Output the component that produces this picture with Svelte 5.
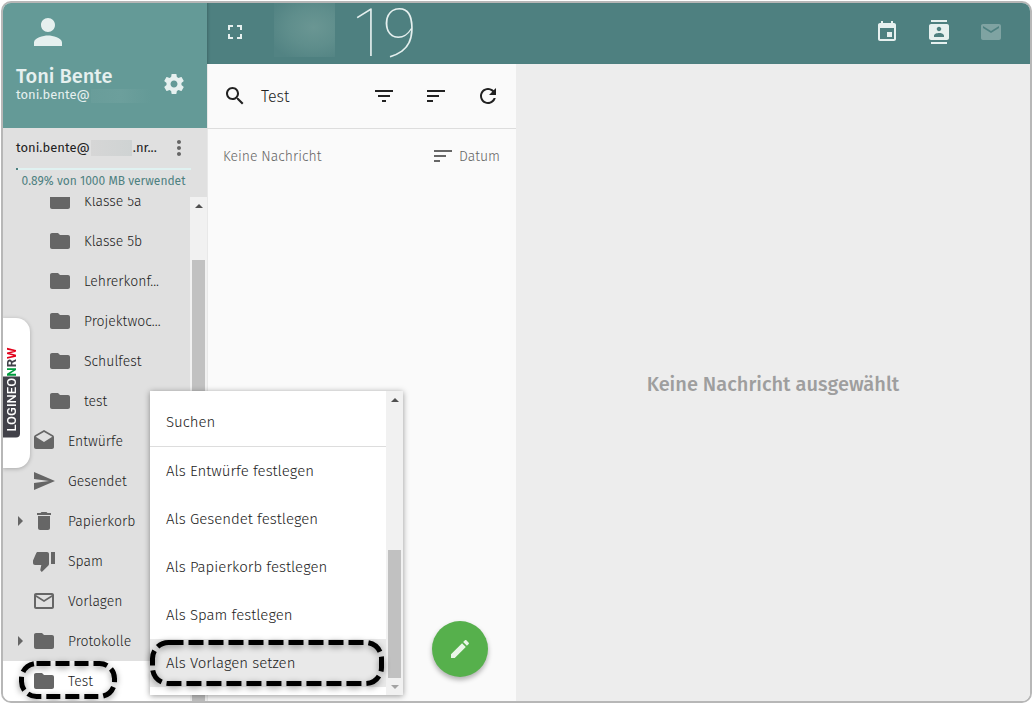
<script lang="ts">
	type Folder = {
		name : string;
		icon : string;
		child? : boolean;
		expandable? : boolean;
		active? : boolean;
	};

	const icons : Record<string, string> = {
		person: 'M12 12c2.21 0 4-1.79 4-4s-1.79-4-4-4-4 1.79-4 4 1.79 4 4 4zm0 2c-2.67 0-8 1.34-8 4v2h16v-2c0-2.66-5.33-4-8-4z',
		settings: 'M19.43 12.98c.04-.32.07-.64.07-.98s-.03-.66-.07-.98l2.11-1.65c.19-.15.24-.42.12-.64l-2-3.46c-.12-.22-.39-.3-.61-.22l-2.49 1c-.52-.4-1.08-.73-1.69-.98l-.38-2.65C14.46 2.18 14.25 2 14 2h-4c-.25 0-.46.18-.49.42l-.38 2.65c-.61.25-1.17.59-1.69.98l-2.49-1c-.23-.09-.49 0-.61.22l-2 3.46c-.13.22-.07.49.12.64l2.11 1.65c-.04.32-.07.65-.07.98s.03.66.07.98l-2.11 1.65c-.19.15-.24.42-.12.64l2 3.46c.12.22.39.3.61.22l2.49-1c.52.4 1.08.73 1.69.98l.38 2.65c.03.24.24.42.49.42h4c.25 0 .46-.18.49-.42l.38-2.65c.61-.25 1.17-.59 1.69-.98l2.49 1c.23.09.49 0 .61-.22l2-3.46c.12-.22.07-.49-.12-.64l-2.11-1.65zM12 15.5c-1.93 0-3.5-1.57-3.5-3.5s1.57-3.5 3.5-3.5 3.5 1.57 3.5 3.5-1.57 3.5-3.5 3.5z',
		more: 'M12 8c1.1 0 2-.9 2-2s-.9-2-2-2-2 .9-2 2 .9 2 2 2zm0 2c-1.1 0-2 .9-2 2s.9 2 2 2 2-.9 2-2-.9-2-2-2zm0 6c-1.1 0-2 .9-2 2s.9 2 2 2 2-.9 2-2-.9-2-2-2z',
		folder: 'M10 4H4c-1.1 0-1.99.9-1.99 2L2 18c0 1.1.9 2 2 2h16c1.1 0 2-.9 2-2V8c0-1.1-.9-2-2-2h-8l-2-2z',
		drafts: 'M21.99 8c0-.72-.37-1.35-.94-1.7L12 1 2.95 6.3C2.38 6.65 2 7.28 2 8v10c0 1.1.9 2 2 2h16c1.1 0 2-.9 2-2l-.01-10zM12 13L3.74 7.84 12 3l8.26 4.84L12 13z',
		send: 'M2.01 21L23 12 2.01 3 2 10l15 2-15 2z',
		trash: 'M6 19c0 1.1.9 2 2 2h8c1.1 0 2-.9 2-2V7H6v12zM19 4h-3.5l-1-1h-5l-1 1H5v2h14V4z',
		spam: 'M15 3H6c-.83 0-1.54.5-1.84 1.22l-3.02 7.05c-.09.23-.14.47-.14.73v2c0 1.1.9 2 2 2h6.31l-.95 4.57-.03.32c0 .41.17.79.44 1.06L9.83 23l6.59-6.59c.36-.36.58-.86.58-1.41V5c0-1.1-.9-2-2-2zm4 0v12h4V3h-4z',
		mailOutline: 'M20 4H4c-1.1 0-1.99.9-1.99 2L2 18c0 1.1.9 2 2 2h16c1.1 0 2-.9 2-2V6c0-1.1-.9-2-2-2zm0 14H4V8l8 5 8-5v10zm-8-7L4 6h16l-8 5z',
		mail: 'M20 4H4c-1.1 0-1.99.9-1.99 2L2 18c0 1.1.9 2 2 2h16c1.1 0 2-.9 2-2V6c0-1.1-.9-2-2-2zm0 4l-8 5-8-5V6l8 5 8-5v2z',
		arrow: 'M10 17l5-5-5-5v10z',
		fullscreen: 'M7 14H5v5h5v-2H7v-3zm-2-4h2V7h3V5H5v5zm12 7h-3v2h5v-5h-2v3zM14 5v2h3v3h2V5h-5z',
		calendar: 'M17 12h-5v5h5v-5zM16 1v2H8V1H6v2H5c-1.11 0-1.99.9-1.99 2L3 19c0 1.1.89 2 2 2h14c1.1 0 2-.9 2-2V5c0-1.1-.9-2-2-2h-1V1h-2zm3 18H5V8h14v11z',
		contacts: 'M20 0H4v2h16V0zM4 24h16v-2H4v2zM20 4H4c-1.1 0-2 .9-2 2v12c0 1.1.9 2 2 2h16c1.1 0 2-.9 2-2V6c0-1.1-.9-2-2-2zm-8 2.75c1.24 0 2.25 1.01 2.25 2.25s-1.01 2.25-2.25 2.25S9.75 10.24 9.75 9 10.76 6.75 12 6.75zM17 17H7v-1.5c0-1.67 3.33-2.5 5-2.5s5 .83 5 2.5V17z',
		search: 'M15.5 14h-.79l-.28-.27C15.41 12.59 16 11.11 16 9.5 16 5.91 13.09 3 9.5 3S3 5.91 3 9.5 5.91 16 9.5 16c1.61 0 3.09-.59 4.23-1.57l.27.28v.79l5 4.99L20.49 19l-4.99-5zm-6 0C7.01 14 5 11.99 5 9.5S7.01 5 9.5 5 14 7.01 14 9.5 11.99 14 9.5 14z',
		filter: 'M10 18h4v-2h-4v2zM3 6v2h18V6H3zm3 7h12v-2H6v2z',
		sort: 'M3 18h6v-2H3v2zM3 6v2h18V6H3zm0 7h12v-2H3v2z',
		refresh: 'M17.65 6.35C16.2 4.9 14.21 4 12 4c-4.42 0-7.99 3.58-7.99 8s3.57 8 7.99 8c3.73 0 6.84-2.55 7.73-6h-2.08c-.82 2.33-3.04 4-5.65 4-3.31 0-6-2.69-6-6s2.69-6 6-6c1.66 0 3.14.69 4.22 1.78L13 11h7V4l-2.35 2.35z',
		edit: 'M3 17.25V21h3.75L17.81 9.94l-3.75-3.75L3 17.25zM20.71 7.04c.39-.39.39-1.02 0-1.41l-2.34-2.34c-.39-.39-1.02-.39-1.41 0l-1.83 1.83 3.75 3.75 1.83-1.83z'
	};

	const folders : Folder[] = [
		{ name: 'Klasse 5a', icon: 'folder', child: true },
		{ name: 'Klasse 5b', icon: 'folder', child: true },
		{ name: 'Lehrerkonf...', icon: 'folder', child: true },
		{ name: 'Projektwoc...', icon: 'folder', child: true },
		{ name: 'Schulfest', icon: 'folder', child: true },
		{ name: 'test', icon: 'folder', child: true },
		{ name: 'Entwürfe', icon: 'drafts' },
		{ name: 'Gesendet', icon: 'send' },
		{ name: 'Papierkorb', icon: 'trash', expandable: true },
		{ name: 'Spam', icon: 'spam' },
		{ name: 'Vorlagen', icon: 'mailOutline' },
		{ name: 'Protokolle', icon: 'folder', expandable: true },
		{ name: 'Test', icon: 'folder', active: true }
	];

	const actions = [
		'Als Entwürfe festlegen',
		'Als Gesendet festlegen',
		'Als Papierkorb festlegen',
		'Als Spam festlegen',
		'Als Vorlagen setzen'
	];

	const used = 0.89;
	let selected = $state('Als Vorlagen setzen');
</script>

{#snippet icon(name : string)}
	<svg class="icon" viewBox="0 0 24 24" aria-hidden="true"><path d={icons[name]} /></svg>
{/snippet}

<div class="frame">
	<aside class="sidebar">
		<header class="profile">
			<div class="avatar">{@render icon('person')}</div>
			<div class="profile-row">
				<div class="who">
					<strong>Toni Bente</strong>
					<span>toni.bente@<i class="smudge light"></i></span>
				</div>
				<button aria-label="Einstellungen">{@render icon('settings')}</button>
			</div>
		</header>

		<div class="account">
			<span class="address">toni.bente@<i class="smudge"></i>.nr...</span>
			<button aria-label="Mehr">{@render icon('more')}</button>
		</div>
		<div class="quota">
			<div class="bar"><div class="bar-fill" style="width: {used}%"></div></div>
			<span>{used}% von 1000 MB verwendet</span>
		</div>

		<nav class="tree">
			<ul class="folders">
				{#each folders as folder}
					<li class:child={folder.child} class:active={folder.active}>
						<button class="folder">
							<span class="toggle">{#if folder.expandable}{@render icon('arrow')}{/if}</span>
							{@render icon(folder.icon)}
							<span>{folder.name}</span>
						</button>
						{#if folder.active}
							<svg class="marker marker-folder" viewBox="0 0 98 38" aria-hidden="true">
								<rect x="2.5" y="2.5" width="93" height="33" rx="15" />
							</svg>
						{/if}
					</li>
				{/each}
			</ul>
			<div class="scrollbar">
				<i class="up"></i>
				<div class="thumb tree-thumb"></div>
			</div>
		</nav>
	</aside>

	<header class="topbar">
		<button aria-label="Vollbild">{@render icon('fullscreen')}</button>
		<div class="brand-smudge"></div>
		<span class="brand">19</span>
		<div class="apps">
			<button aria-label="Kalender">{@render icon('calendar')}</button>
			<button aria-label="Kontakte">{@render icon('contacts')}</button>
			<button aria-label="E-Mail" disabled>{@render icon('mail')}</button>
		</div>
	</header>

	<section class="messages">
		<div class="toolbar">
			<button aria-label="Suchen">{@render icon('search')}</button>
			<h2>Test</h2>
			<button aria-label="Filtern">{@render icon('filter')}</button>
			<button aria-label="Sortieren">{@render icon('sort')}</button>
			<button aria-label="Aktualisieren">{@render icon('refresh')}</button>
		</div>
		<div class="list-head">
			<span>Keine Nachricht</span>
			<button class="order">{@render icon('sort')}Datum</button>
		</div>
		<button class="compose" aria-label="Neue Nachricht">{@render icon('edit')}</button>
	</section>

	<main class="preview">
		<p>Keine Nachricht ausgewählt</p>
	</main>

	<a class="logineo" href="#logineo">
		<span class="logo"><b>LOGINEO</b><em><i class="green">N</i>R<i class="red">W</i></em></span>
	</a>

	<div class="menu">
		<div class="menu-items">
			<button class="search-item">Suchen</button>
			{#each actions as action}
				<button class:selected={selected === action} onclick={() => (selected = action)}>
					{action}
					{#if selected === action}
						<svg class="marker marker-menu" viewBox="0 0 234 46" aria-hidden="true">
							<rect x="2.5" y="2.5" width="229" height="41" rx="16" />
						</svg>
					{/if}
				</button>
			{/each}
		</div>
		<div class="scrollbar menu-scroll">
			<i class="up"></i>
			<div class="thumb menu-thumb"></div>
			<i class="down"></i>
		</div>
	</div>
</div>

<style>
	:global(body) {
		background: #fff;
	}

	.frame {
		position: relative;
		display: grid;
		grid-template-columns: 204px 309px 1fr;
		grid-template-rows: 61px 1fr;
		grid-template-areas:
			"side top top"
			"side list view";
		box-sizing: border-box;
		height: calc(100vh - 1px);
		min-height: 600px;
		margin: 1px 1px 0;
		border: 2px solid #b7b7b7;
		border-radius: 10px;
		overflow: hidden;
		font-family: "Fira Sans", "Noto Sans", sans-serif;
		font-size: 14px;
		font-weight: 300;
		color: #222;
	}

	button {
		display: flex;
		align-items: center;
		justify-content: center;
		padding: 0;
		border: none;
		background: none;
		font: inherit;
		color: inherit;
		cursor: pointer;
	}

	ul {
		margin: 0;
		padding: 0;
		list-style: none;
	}

	.icon {
		display: block;
		flex: none;
		width: 24px;
		height: 24px;
		fill: currentColor;
	}

	.sidebar {
		grid-area: side;
		display: flex;
		flex-direction: column;
		min-height: 0;
		background: #e0e0e0;
	}

	.profile {
		box-sizing: border-box;
		height: 125px;
		padding: 8px 21px 0 13px;
		background: #649a97;
		color: #e6f0ef;
	}

	.avatar .icon {
		width: 42px;
		height: 42px;
		margin-left: 11px;
	}

	.profile-row {
		display: flex;
		justify-content: space-between;
		padding-top: 12px;
	}

	.who {
		display: flex;
		flex-direction: column;
		font-size: 13px;
		font-weight: 400;
		line-height: 16px;
	}

	.who strong {
		font-size: 20px;
		line-height: 22px;
		font-weight: 500;
	}

	.profile-row button {
		height: 38px;
	}

	.smudge {
		display: inline-block;
		width: 41px;
		height: 16px;
		margin: 0 1px;
		vertical-align: middle;
		background: linear-gradient(90deg, #d6d6d6, #cfd3d3);
	}

	.smudge.light {
		width: 60px;
		height: 14px;
		background: linear-gradient(90deg, #699d9a, #6c9f9c 50%, #649a97);
	}

	.account {
		display: flex;
		align-items: center;
		justify-content: space-between;
		height: 40px;
		padding: 0 16px 0 13px;
		font-size: 13px;
		font-weight: 400;
		white-space: nowrap;
	}

	.account button {
		color: #666;
	}

	.quota {
		display: flex;
		flex-direction: column;
		height: 29px;
		padding: 0 16px 0 13px;
		font-size: 12px;
		font-weight: 400;
		line-height: 22px;
		text-align: center;
		color: #4e8080;
	}

	.bar {
		height: 2px;
		background: #e0f2f1;
	}

	.bar-fill {
		height: 2px;
		background: #4e8080;
	}

	.tree {
		flex: 1;
		display: flex;
		min-height: 0;
	}

	/* list is scrolled to its end */
	.folders {
		flex: 1;
		display: flex;
		flex-direction: column;
		justify-content: flex-end;
		overflow: hidden;
	}

	.folders li {
		position: relative;
		flex: none;
		height: 40px;
	}

	.folder {
		width: 100%;
		height: 40px;
		justify-content: flex-start;
		padding-left: 5px;
	}

	.child .folder {
		padding-left: 21px;
	}

	.folder .icon {
		color: #666;
	}

	.folder > .icon {
		margin-right: 12px;
	}

	.toggle {
		width: 24px;
	}

	.active {
		background: #fff;
	}

	.marker {
		position: absolute;
		overflow: visible;
		fill: none;
		stroke: #000;
		stroke-width: 5;
		filter: drop-shadow(0 2px 3px rgba(0, 0, 0, .4));
		pointer-events: none;
	}

	.marker-folder {
		left: 16px;
		top: 0;
		width: 98px;
		height: 38px;
		stroke-dasharray: 14 5;
	}

	.marker-menu {
		left: 0;
		top: 1px;
		width: 234px;
		height: 46px;
		stroke-dasharray: 15 5;
	}

	.scrollbar {
		display: flex;
		flex-direction: column;
		align-items: center;
		flex: none;
		width: 17px;
		background: #f1f1f1;
	}

	.up,
	.down {
		box-sizing: border-box;
		width: 8px;
		height: 4px;
		margin: 7px 0 6px;
		border: 4px solid transparent;
		border-top: none;
		border-bottom-color: #505050;
	}

	.down {
		border: 4px solid transparent;
		border-bottom: none;
		border-top-color: #a3a3a3;
	}

	.thumb {
		width: 13px;
		background: #c1c1c1;
	}

	.tree-thumb {
		flex: 1;
		margin-top: 46px;
	}

	.topbar {
		grid-area: top;
		display: flex;
		align-items: center;
		padding: 0 19px 3px 16px;
		background: #4e8080;
		color: #e6f0ef;
		box-shadow: inset 3px 0 3px -2px rgba(0, 0, 0, .2);
	}

	.brand-smudge {
		align-self: flex-start;
		width: 61px;
		height: 54px;
		margin: 0 18px 0 27px;
		background: radial-gradient(ellipse at 65% 45%, #6a9693, #5f8e8c 45%, #528383 85%);
	}

	.brand {
		font-size: 72px;
		font-weight: 200;
		line-height: 58px;
	}

	.apps {
		display: flex;
		gap: 12px;
		margin-left: auto;
	}

	.apps button {
		width: 40px;
		height: 40px;
	}

	.apps button:disabled {
		color: #7fa3a2;
	}

	.messages {
		grid-area: list;
		position: relative;
		background: #fafafa;
		box-shadow: inset 1px 0 #e8e8e8;
	}

	.toolbar {
		display: flex;
		align-items: center;
		gap: 28px;
		height: 64px;
		padding: 0 16px;
		border-bottom: 1px solid #ddd;
	}

	.toolbar h2 {
		flex: 1;
		margin: 0 0 0 -14px;
		font-size: 16px;
		font-weight: 300;
	}

	.list-head {
		display: flex;
		align-items: center;
		justify-content: space-between;
		height: 54px;
		padding: 0 16px;
		color: #666;
	}

	.order {
		gap: 4px;
	}

	.compose {
		position: absolute;
		right: 28px;
		bottom: 24px;
		width: 56px;
		height: 56px;
		border-radius: 50%;
		background: #56b04c;
		color: #e9f5e8;
		box-shadow: 0 3px 5px rgba(0, 0, 0, .3);
	}

	.preview {
		grid-area: view;
		display: flex;
		align-items: center;
		justify-content: center;
		padding-top: 2px;
		background: #ededed;
	}

	.preview p {
		margin: 0;
		font-size: 20px;
		font-weight: 500;
		color: #9e9e9e;
	}

	.logineo {
		position: absolute;
		left: 0;
		top: 315px;
		display: flex;
		align-items: center;
		width: 27px;
		height: 150px;
		border-radius: 0 14px 14px 0;
		background: #fff;
		box-shadow: 0 1px 4px rgba(0, 0, 0, .25);
		text-decoration: none;
	}

	.logo {
		display: flex;
		writing-mode: vertical-rl;
		transform: rotate(180deg);
		font-family: Roboto, sans-serif;
		font-size: 13px;
		line-height: 17px;
		font-weight: 700;
		color: #414149;
	}

	.logo b {
		padding: 6px 0 1px;
		border-radius: 4px 0 0 0;
		background: #414149;
		font-weight: 500;
		color: #fff;
	}

	.logo em,
	.logo i {
		font-style: normal;
	}

	.green {
		color: #009b3e;
	}

	.red {
		color: #e2001a;
	}

	.menu {
		position: absolute;
		left: 147px;
		bottom: 6px;
		display: flex;
		width: 253px;
		height: 304px;
		background: #fff;
		box-shadow: 0 1px 6px rgba(0, 0, 0, .4);
	}

	.menu-items {
		flex: 1;
		display: flex;
		flex-direction: column;
		justify-content: flex-end;
		padding-bottom: 8px;
	}

	.menu button {
		position: relative;
		justify-content: flex-start;
		height: 48px;
		padding: 0 16px;
		font-size: 15px;
	}

	.menu .search-item {
		height: 49px;
		border-bottom: 1px solid #ddd;
	}

	.menu .selected {
		background: #e9e9e9;
	}

	.menu-thumb {
		height: 128px;
		margin-top: auto;
	}
</style>
